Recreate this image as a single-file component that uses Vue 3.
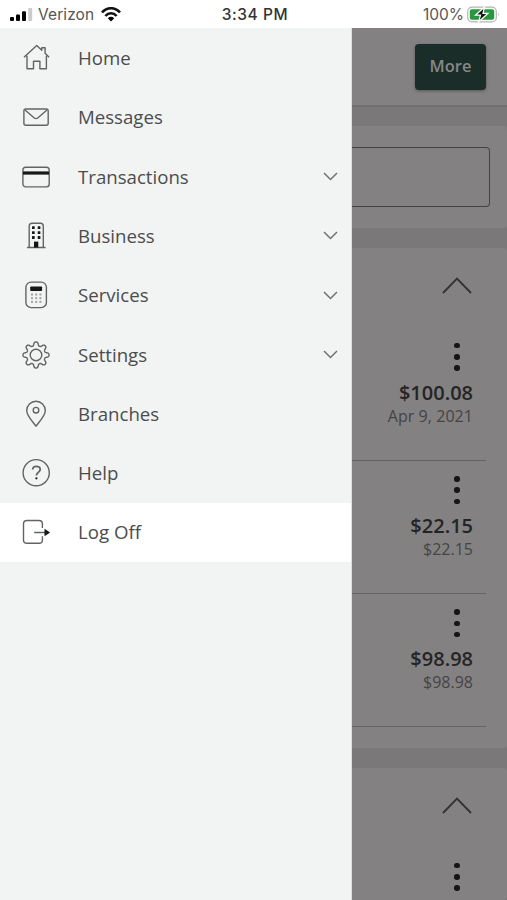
<script setup>
const items = [
  { label: 'Home', icon: 'home' },
  { label: 'Messages', icon: 'mail' },
  { label: 'Transactions', icon: 'card', expandable: true },
  { label: 'Business', icon: 'building', expandable: true },
  { label: 'Services', icon: 'calculator', expandable: true },
  { label: 'Settings', icon: 'gear', expandable: true },
  { label: 'Branches', icon: 'pin' },
  { label: 'Help', icon: 'help' },
  { label: 'Log Off', icon: 'logoff', active: true },
]

const accounts = [
  { amount: '$100.08', detail: 'Apr 9, 2021', dated: true },
  { amount: '$22.15', detail: '$22.15' },
  { amount: '$98.98', detail: '$98.98' },
]

// Eight rounded teeth traced around the icon centre.
const gearPath = (() => {
  const points = []
  for (let i = 0; i < 240; i++) {
    const a = (i / 240) * Math.PI * 2
    const wave = Math.tanh(1.6 * Math.cos(8 * a)) / Math.tanh(1.6)
    const r = 11.2 + 1.8 * wave
    points.push(`${(16 + r * Math.sin(a)).toFixed(2)} ${(16 - r * Math.cos(a)).toFixed(2)}`)
  }
  return `M${points.join('L')}Z`
})()
</script>

<template>
  <div class="screen">
    <header class="status">
      <div class="carrier">
        <svg class="signal" width="23" height="14" viewBox="0 0 23 14">
          <rect x="0" y="9" width="4" height="4" rx="1" />
          <rect x="6" y="6.5" width="4" height="6.5" rx="1" />
          <rect x="12" y="3.2" width="4" height="9.8" rx="1" />
          <rect x="18.2" y="0" width="4" height="13" rx="1" fill="#ccc" />
        </svg>
        <span class="carrier-name">Verizon</span>
        <svg class="wifi" width="20" height="15" viewBox="0 0 20 15">
          <g fill="none" stroke="#111" stroke-width="2.6">
            <path d="M1 5.5C6-.2 14-.2 19 5.5" />
            <path d="M4.4 9C7.5 5.4 12.5 5.4 15.6 9" />
          </g>
          <path d="M6.8 11.2q3.2-2.8 6.4 0L10 14.5z" />
        </svg>
      </div>
      <div class="time">3:34 PM</div>
      <div class="power">
        <span class="percent">100%</span>
        <svg width="33" height="18" viewBox="0 0 33 18">
          <rect x="0.7" y="1.1" width="28.6" height="14.8" rx="4.5" fill="#fff" stroke="#b4b4b4" stroke-width="1.2" />
          <rect x="2.8" y="3.2" width="24.4" height="10.6" rx="2" fill="#26983d" />
          <path d="M31 6.6q1.8 1.8 0 3.7z" fill="#b4b4b4" />
          <path d="M17.5 1 8.5 9.2h5l-2 6.8 9.5-8.7h-5z" fill="#111" stroke="#fff" stroke-width="1.2" />
        </svg>
      </div>
    </header>

    <div class="stage">
      <nav class="menu">
        <a v-for="item in items" :key="item.label" class="item" :class="{ active: item.active }">
          <svg class="icon" width="32" height="32" viewBox="0 0 32 32">
            <template v-if="item.icon === 'home'">
              <path d="M4 15.3 16.7 3.5l5.1 4.7V5.8h3.3v5.5l4 4M7 13.7v13.1h6.5v-7.5h6.4v7.5h6.5V13.7" />
            </template>
            <template v-else-if="item.icon === 'mail'">
              <rect x="3.9" y="8" width="24.3" height="16.3" rx="2" />
              <path d="m5 9 9.3 8q1.7 1.3 3.4 0L27 9" />
            </template>
            <template v-else-if="item.icon === 'card'">
              <rect x="2.9" y="6.3" width="26.3" height="19.6" rx="2.8" />
              <path class="solid" d="M3 10.4h26v3.2H3z" />
            </template>
            <template v-else-if="item.icon === 'building'">
              <path d="M7 27.5h18.6M9.2 27.5V6q0-2.8 2.8-2.8h8.5q2.8 0 2.8 2.8v21.5" />
              <template v-for="y in [6.3, 11.2, 16.1]" :key="y">
                <rect class="solid" x="12" :y="y" width="2.7" height="2.8" rx=".5" />
                <rect class="solid" x="17.7" :y="y" width="2.7" height="2.8" rx=".5" />
              </template>
              <path class="solid" d="M14 21.6h4.3v6H14z" />
            </template>
            <template v-else-if="item.icon === 'calculator'">
              <rect x="5.9" y="3.1" width="20.5" height="25.5" rx="5.2" />
              <rect class="solid" x="10.2" y="7.4" width="11.9" height="4.6" rx=".8" />
              <template v-for="y in [14.5, 18.2, 21.9]" :key="y">
                <rect v-for="x in [11, 15.2, 19.4]" :key="x" class="key" :x="x" :y="y" width="2" height="2" />
              </template>
            </template>
            <template v-else-if="item.icon === 'gear'">
              <path :d="gearPath" />
              <circle cx="16" cy="16" r="5.8" />
            </template>
            <template v-else-if="item.icon === 'pin'">
              <path d="M16 28.2C14 25 6.7 18.2 6.7 12.5a9.3 9.3 0 0 1 18.6 0C25.3 18.2 18 25 16 28.2z" />
              <circle cx="16" cy="12.2" r="2.8" />
            </template>
            <template v-else-if="item.icon === 'help'">
              <circle cx="16.2" cy="15.7" r="13.1" />
              <path class="question" d="M12.7 12.6c0-4.5 7.5-4.3 7.5-.2 0 2.9-3.8 3-3.8 6" />
              <circle class="solid" cx="16.4" cy="21.3" r="1.1" />
            </template>
            <template v-else>
              <path d="M22.4 12V8q0-3.5-3.5-3.5H7Q3.5 4.5 3.5 8v16Q3.5 27.3 7 27.3h12q3.4 0 3.4-3.3v-3.8M14.2 16.5h11" />
              <path class="solid" d="m24.5 12.8 5.6 3.7-5.6 3.7z" />
            </template>
          </svg>
          <span class="label">{{ item.label }}</span>
          <svg v-if="item.expandable" class="expand" width="15" height="9" viewBox="0 0 15 9">
            <path d="m1 1 6.5 6.5L14 1" />
          </svg>
        </a>
      </nav>

      <main class="content">
        <div class="toolbar"><button class="more">More</button></div>
        <section class="panel search"><div class="field"></div></section>
        <section class="panel accounts">
          <svg class="collapse" width="30" height="17" viewBox="0 0 30 17">
            <path d="m1 16 14-14.5L29 16" />
          </svg>
          <article v-for="account in accounts" :key="account.amount" class="account">
            <span class="dots"><i></i><i></i><i></i></span>
            <strong class="amount">{{ account.amount }}</strong>
            <span class="detail" :class="{ dated: account.dated }">{{ account.detail }}</span>
          </article>
        </section>
        <section class="panel next">
          <svg class="collapse" width="30" height="17" viewBox="0 0 30 17">
            <path d="m1 16 14-14.5L29 16" />
          </svg>
          <article class="account">
            <span class="dots"><i></i><i></i><i></i></span>
          </article>
        </section>
      </main>
    </div>
  </div>
</template>

<style>
body {
  margin: 0;
  overflow: hidden;
}
</style>

<style scoped>
* {
  box-sizing: border-box;
}
.screen {
  width: 507px;
  height: 900px;
  overflow: hidden;
  display: flex;
  flex-direction: column;
  background: #fff;
  font-family: "Open Sans", sans-serif;
}
.status {
  height: 28px;
  flex: none;
  display: grid;
  grid-template-columns: 1fr auto 1fr;
  align-items: center;
  padding: 1px 7px 0 10px;
  font-family: Inter, sans-serif;
  color: #555;
}
.carrier,
.power {
  display: flex;
  align-items: center;
}
.carrier-name {
  margin-left: 5px;
  font-size: 15.5px;
  letter-spacing: 0.1px;
}
.wifi {
  margin-left: 7px;
}
.time {
  font-size: 15.5px;
  font-weight: 500;
  letter-spacing: 0.6px;
  color: #333;
}
.power {
  justify-content: flex-end;
  gap: 3px;
}
.percent {
  font-size: 15.5px;
}
.stage {
  flex: 1;
  min-height: 0;
  display: flex;
}
.menu {
  width: 352px;
  flex: none;
  padding-top: 0.4px;
  background: #f2f4f4;
  border-right: 1px solid #dcdfdf;
}
.item {
  height: 59.3px;
  display: flex;
  align-items: center;
  padding: 0 13px 0 20px;
  color: #4b4d4d;
}
.active {
  background: #fff;
}
.icon {
  flex: none;
  fill: none;
  stroke: #626464;
  stroke-width: 1.4;
  stroke-linejoin: round;
}
.solid {
  fill: #151616;
  stroke: none;
}
.key {
  fill: #a0a2a2;
  stroke: none;
}
.question {
  stroke-width: 1.8;
}
.label {
  flex: 1;
  margin-left: 26px;
  font-size: 18.65px;
  line-height: 26px;
}
.expand {
  fill: none;
  stroke: #707272;
  stroke-width: 1.5;
}
.content {
  flex: 1;
  min-width: 0;
  background: #7a7879;
}
.toolbar {
  height: 78.5px;
  padding: 16px 21px 0 0;
  display: flex;
  justify-content: flex-end;
  align-items: flex-start;
  background: #838182;
  border-bottom: 2px solid #706e6f;
}
.more {
  width: 71px;
  height: 46px;
  padding: 0 0 3px;
  border: 0;
  border-radius: 4px;
  background: #1b2d28;
  color: #858788;
  font: 600 16.5px "Open Sans", sans-serif;
  box-shadow: 0 1px 3px #565556;
}
.panel {
  background: #838182;
  border-radius: 0 4px 4px 0;
}
.search {
  height: 102.5px;
  margin-top: 19px;
  padding: 21px 17px 0 0;
}
.field {
  height: 60px;
  border: 1.5px solid #444344;
  border-left: 0;
  border-radius: 0 4px 4px 0;
}
.accounts,
.next {
  margin-top: 20px;
  padding: 28.5px 21px 0 0;
}
.accounts {
  height: 500px;
}
.next {
  height: 132px;
}
.collapse {
  display: block;
  margin: 0 14px 34px auto;
  fill: none;
  stroke: #333233;
  stroke-width: 1.8;
}
.account {
  height: 133.2px;
  display: flex;
  flex-direction: column;
  align-items: flex-end;
  padding: 15.5px 13px 0 0;
  border-bottom: 1px solid #656364;
}
.next .account {
  border: 0;
}
.dots {
  display: flex;
  flex-direction: column;
  gap: 5.8px;
  margin-right: 13.3px;
}
.dots i {
  width: 5.4px;
  height: 5.4px;
  border-radius: 50%;
  background: #171617;
}
.amount {
  margin-top: 8px;
  font-size: 20px;
  font-weight: 600;
  line-height: 28px;
  color: #252425;
}
.detail {
  font-size: 16px;
  line-height: 19px;
  color: #454445;
}
.dated {
  letter-spacing: 0.05px;
}
</style>
